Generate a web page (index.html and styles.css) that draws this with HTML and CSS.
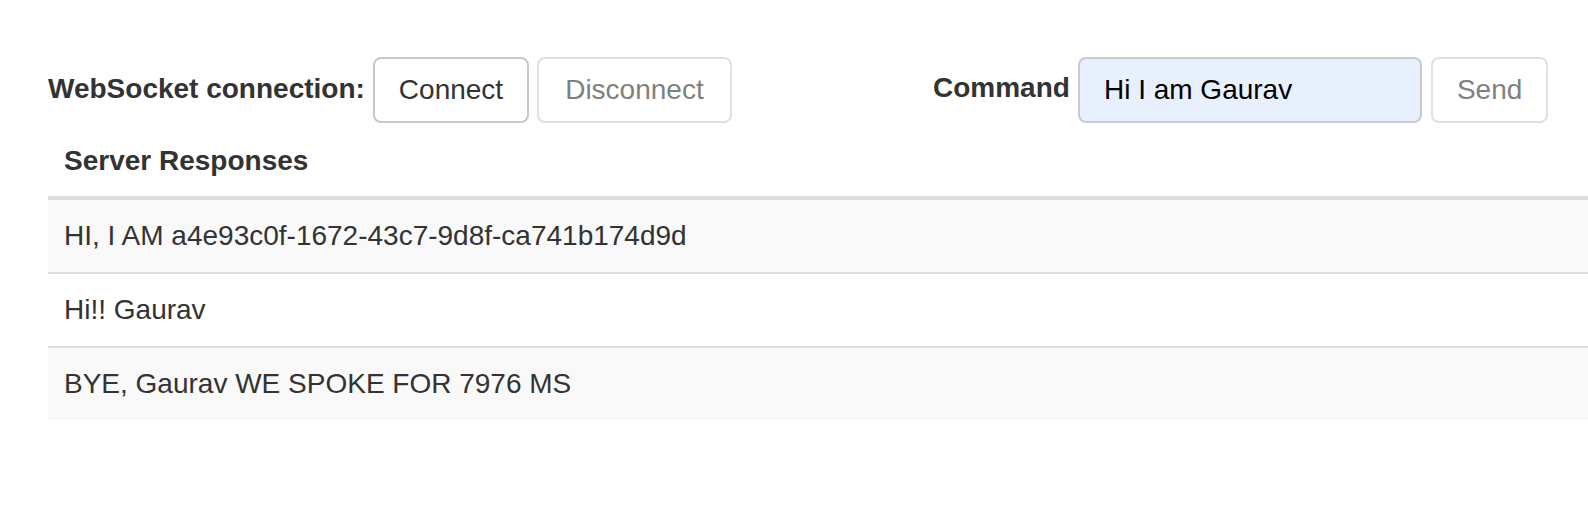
FILE: index.html
```html
<!DOCTYPE html>
<html lang="en">
<head>
<meta charset="utf-8">
<title>WebSocket</title>
<link rel="stylesheet" href="styles.css">
</head>
<body>
<main class="page">
  <div class="toolbar">
    <form class="group">
      <label class="label label-conn">WebSocket connection:</label>
      <button class="btn" type="button">Connect</button>
      <button class="btn btn-wide" type="button" disabled>Disconnect</button>
    </form>
    <form class="group">
      <label class="label label-cmd" for="cmd">Command</label>
      <input id="cmd" class="field" type="text" value="Hi I am Gaurav">
      <button class="btn btn-send" type="button" disabled>Send</button>
    </form>
  </div>
  <table class="responses">
    <thead><tr><th>Server Responses</th></tr></thead>
    <tbody>
      <tr><td>HI, I AM a4e93c0f-1672-43c7-9d8f-ca741b174d9d</td></tr>
      <tr><td>Hi!! Gaurav</td></tr>
      <tr><td>BYE, Gaurav WE SPOKE FOR 7976 MS</td></tr>
    </tbody>
  </table>
</main>
</body>
</html>
```
FILE: styles.css
```css
html, body {
  margin: 0;
  background: #fff;
}
body {
  font-family: "Liberation Sans", Arial, sans-serif;
  font-size: 28px;
  line-height: 40px;
  color: #333;
  overflow: hidden;
}
.page {
  padding: 57px 0 0 48px;
}
.toolbar {
  display: grid;
  grid-template-columns: 885px auto;
}
.group {
  display: flex;
  align-items: flex-start;
  margin: 0;
}
.label {
  font-weight: bold;
  margin-right: 8px;
}
.label-conn {
  margin-top: 12px;
}
.label-cmd {
  margin-top: 11px;
}
.btn {
  font: inherit;
  line-height: 40px;
  padding: 11px 24px;
  border: 2px solid #c8c8c8;
  border-radius: 8px;
  background: #fff;
  color: #333;
  margin: 0 8px 0 0;
}
.btn-wide {
  padding: 11px 26px;
}
.btn:disabled {
  color: #808080;
  border-color: #e0e0e0;
}
.btn-send {
  margin-left: 1px;
}
.field {
  box-sizing: border-box;
  width: 344px;
  height: 66px;
  font: inherit;
  padding: 0 24px;
  border: 2px solid #c7cbd1;
  border-radius: 8px;
  background: #e8f0fe;
  color: #000;
  margin: 0 8px 0 0;
}
.responses {
  width: 100%;
  border-collapse: collapse;
  border-spacing: 0;
}
.responses th {
  text-align: left;
  padding: 18px 16px 15px;
  border-bottom: 4px solid #ddd;
  line-height: 40px;
}
.responses td {
  padding: 16px 16px 16px;
  border-top: 2px solid #ddd;
  line-height: 40px;
}
.responses tbody tr:nth-child(odd) td {
  background: #f9f9f9;
}
```
